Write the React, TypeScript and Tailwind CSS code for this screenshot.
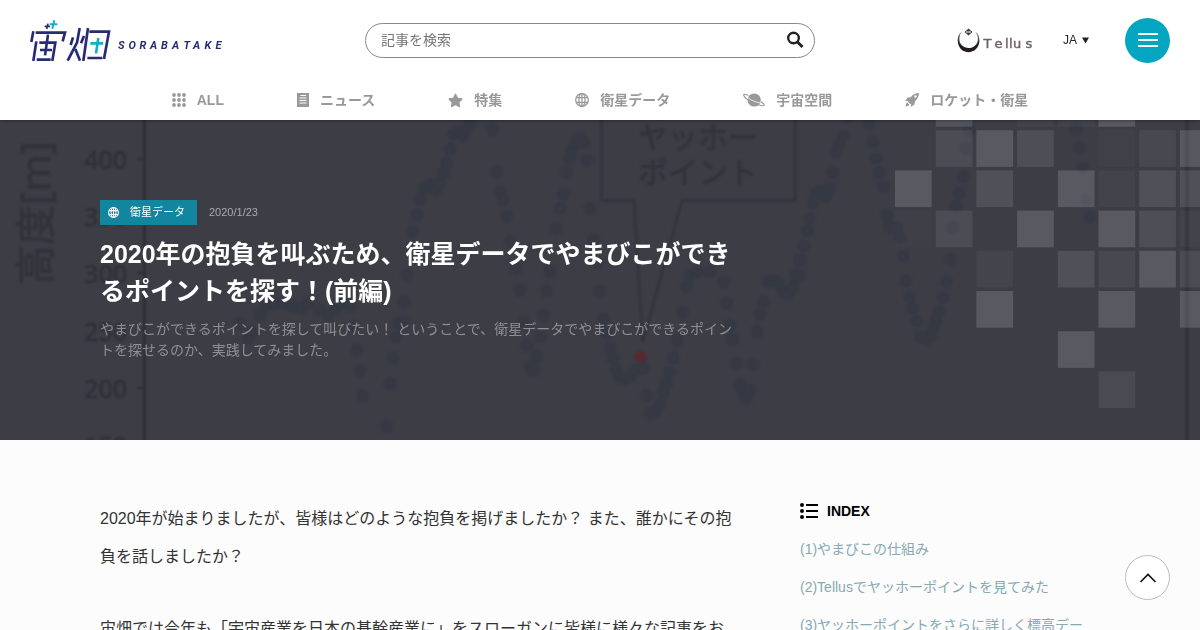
import React from "react";
import { FaStar } from "react-icons/fa";

type Point = [number, number];

const leftDots: Point[] = [
  [720, 610], [745, 655], [755, 635], [780, 585], [800, 555], [825, 550], [850, 548], [880, 560], [905, 565], [925, 550],
  [960, 570], [985, 585], [1005, 570], [1025, 550], [1050, 558], [1070, 690], [1080, 752], [1088, 827], [1160, 920],
  [1170, 790], [1180, 713], [1188, 650], [1195, 610], [1060, 620],
];

const centerDots: Point[] = [
  [8, 605], [12, 545], [20, 465], [38, 333], [50, 285], [60, 237], [72, 205], [90, 195], [105, 208], [120, 190], [130, 158],
  [140, 128], [150, 87], [160, 42], [178, 35], [190, 45], [200, 28], [210, 8], [278, 30], [290, 155], [300, 215], [310, 240],
  [320, 288], [330, 365], [348, 445], [360, 510], [370, 605], [380, 677], [390, 740], [400, 752], [410, 710], [422, 652],
  [430, 585], [440, 513], [450, 455], [468, 325], [480, 265], [490, 223], [499, 157], [508, 115], [517, 90], [530, 65],
  [542, 55], [550, 68], [560, 120], [570, 265], [580, 360], [592, 430], [600, 514], [610, 598], [620, 640], [630, 685],
  [640, 715], [648, 750], [660, 772], [675, 775], [690, 770], [705, 750], [730, 745], [740, 827], [750, 880], [765, 875],
  [780, 852], [790, 815], [800, 790], [808, 757], [820, 713], [830, 660], [848, 577], [860, 500], [870, 465], [895, 455],
  [930, 455], [970, 486], [980, 549], [990, 615], [998, 658], [1010, 730], [1020, 795], [1030, 815], [1037, 835],
  [1050, 810], [1060, 733], [1070, 635], [1080, 582], [1090, 545], [1102, 485], [1120, 482], [1135, 490], [1150, 515],
  [1165, 522], [1180, 500], [1187, 465], [1198, 420],
];

const rightDots: Point[] = [
  [0, 467], [3, 420], [12, 378], [22, 333], [29, 296], [38, 250], [48, 222], [58, 215], [78, 230], [90, 205], [98, 158],
  [108, 97], [118, 72], [130, 48], [140, -10], [208, 10], [218, 65], [228, 115], [238, 158], [250, 200], [259, 286],
  [268, 320], [290, 322], [300, 353], [310, 409], [318, 482], [328, 532], [338, 565], [350, 604], [360, 650], [378, 658],
  [392, 645], [400, 620], [408, 600], [418, 575], [430, 534], [440, 486], [450, 418], [458, 323], [468, 257], [478, 220],
  [490, 170], [497, 85], [508, 30], [828, 30], [838, 82], [848, 143], [858, 240], [870, 291],
];

const tiles: [number, number, number][] = [
  [1, 0, 0.12], [3, 0, 0.03], [4, 0, 0.03], [5, 0, 0.15],
  [1, 1, 0.08], [2, 1, 0.15], [3, 1, 0.09], [5, 1, 0.02], [6, 1, 0.06], [7, 1, 0.14],
  [0, 2, 0.15], [2, 2, 0.1], [4, 2, 0.15], [5, 2, 0.03], [6, 2, 0.1], [7, 2, 0.1],
  [0, 3, 0.01], [1, 3, 0.08], [3, 3, 0.15], [5, 3, 0.15], [6, 3, 0.09], [7, 3, 0.03],
  [2, 4, 0.04], [4, 4, 0.1], [5, 4, 0.06], [6, 4, 0.15], [7, 4, 0.08],
  [2, 5, 0.15], [5, 5, 0.15], [7, 5, 0.15],
  [4, 6, 0.15],
  [5, 7, 0.07],
];

function Dots({ points }: { points: Point[] }) {
  return (
    <g fill="#353943">
      {points.map(([x, y], i) => (
        <circle key={i} cx={x} cy={y} r="19" />
      ))}
    </g>
  );
}

function HeroChart() {
  return (
    <svg
      className="absolute inset-0 h-full w-full"
      viewBox="0 0 1200 320"
      preserveAspectRatio="xMidYMid slice"
      aria-hidden="true"
    >
      <g className="blur-[1px]">
        <g transform="scale(.33333)">
          <Dots points={leftDots} />
        </g>
        <g transform="translate(400 0) scale(.33333)">
          <Dots points={centerDots} />
          <path
            d="M604 -20V241H702L728 665M728 665L846 241H1186V-20"
            fill="none"
            stroke="#303038"
            strokeWidth="5"
          />
          <circle cx="722" cy="711" r="18" fill="#582931" />
        </g>
        <g transform="translate(800 0) scale(.33333)">
          <Dots points={rightDots} />
        </g>
        <path d="M144.500 -5V330M1187 -5V330" stroke="#2d2d36" strokeWidth="2.500" />
        <path d="M137 39h8M137 96h8M137 153h8M137 210h8M137 268h8" stroke="#2d2d36" strokeWidth="2" />
        <g
          fill="#303038"
          stroke="#303038"
          strokeWidth=".5"
          fontFamily="'Noto Sans', sans-serif"
          fontSize="25"
          textAnchor="end"
        >
          <text x="127" y="49">400</text>
          <text x="127" y="106">350</text>
          <text x="127" y="163">300</text>
          <text x="127" y="221">250</text>
          <text x="127" y="278">200</text>
          <text x="127" y="335">150</text>
        </g>
        <text
          transform="translate(50 165) rotate(-90)"
          fill="#32323a"
          stroke="#32323a"
          strokeWidth=".5"
          fontFamily="'Noto Sans', 'Noto Sans CJK JP', sans-serif"
          fontSize="40"
        >
          高度[m]
        </text>
        <g fill="#32323a" fontFamily="'Noto Sans CJK JP', sans-serif" fontSize="30" fontWeight="500" textAnchor="middle">
          <text x="698" y="28">ヤッホー</text>
          <text x="698" y="63">ポイント</text>
        </g>
      </g>
      <g transform="translate(895 -30)" fill="#fff">
        {tiles.map(([col, row, alpha]) => (
          <rect
            key={`${col}-${row}`}
            x={col * 40.7}
            y={row * 40.2}
            width="36.700"
            height="36.700"
            fillOpacity={alpha}
          />
        ))}
      </g>
    </svg>
  );
}

function SorabatakeLogo() {
  return (
    <svg className="block h-[42px] w-[193px]" viewBox="30 19 193 42" role="img" aria-label="宙畑 SORABATAKE">
      <g transform="scale(.33333)" fill="none" stroke="#272b72" strokeWidth="8">
        <path d="M100 94L94 126M107 98H195L188 124" />
        <path d="M144 71L140 87M134 79H150" strokeWidth="5" />
        <path d="M163 61L157 86M149 73H172" stroke="#12b0c4" strokeWidth="6" />
        <path d="M109 124L100 183M118 128H166L157 183M144 104L135 166M120 150H156M110 179H152" />
        <path d="M219 112L212 135M239 84L231 128L203 182M252 108L243 130M226 147L240 182" />
        <path d="M268 95H327L312 177M264 84L250 183M262 174H307M276 95H321" />
        <path d="M295 114L288 160M271 130H309" stroke="#12b0c4" />
      </g>
      <text
        x="118 128.500 139.500 150 161 172 183.500 193 204.500 215.500"
        y="48.500"
        fill="#272b72"
        fontFamily="Roboto, sans-serif"
        fontSize="11"
        fontStyle="italic"
        fontWeight="700"
      >
        SORABATAKE
      </text>
    </svg>
  );
}

function TellusLogo() {
  return (
    <svg className="block h-[26px] w-[78px]" viewBox="957 27 78 26" role="img" aria-label="Tellus">
      <path
        d="M961 32.500C956 37 957 46 962 50C966 53 972 53 976 49C981 44 980 36 976 32.500C980 38 978 44 974 46.500C970 49 965 48.500 961.500 45C958.500 42 958.500 36.500 961 32.500Z"
        fill="#231c1b"
      />
      <path d="M961 32.500C958 36 958 42 961.500 45M976 32.500C979 36 979 41 976 45" fill="none" stroke="#777" strokeWidth=".6" />
      <path d="M968.500 28.500L972.500 32L968.500 35.500L964.500 32Z" fill="#443c3a" />
      <path d="M966 32H971" stroke="#fff" />
      <text
        x="983.500 994.500 1005 1009 1013 1025.500"
        y="47.500"
        fill="#6b6462"
        stroke="#6b6462"
        strokeWidth=".4"
        fontFamily="'DejaVu Sans', sans-serif"
        fontSize="13"
      >
        Tellus
      </text>
    </svg>
  );
}

function GlobeIcon({ className }: { className: string }) {
  return (
    <svg className={className} viewBox="0 0 14 14" fill="none" stroke="currentColor" strokeWidth="1.300" aria-hidden="true">
      <circle cx="7" cy="7" r="6.300" />
      <ellipse cx="7" cy="7" rx="3.100" ry="6.300" />
      <path d="M7 .7V13.300M1.300 4.600H12.700M1.300 9.400H12.700" />
    </svg>
  );
}

function GridIcon() {
  return (
    <svg className="h-[14px] w-[14px]" viewBox="0 0 14 14" fill="currentColor" aria-hidden="true">
      {[2, 7, 12].map((y) => [2, 7, 12].map((x) => <circle key={`${x}-${y}`} cx={x} cy={y} r="1.900" />))}
    </svg>
  );
}

function NewsIcon() {
  return (
    <svg className="h-[14px] w-[12px]" viewBox="0 0 12 14" aria-hidden="true">
      <path d="M0 0H12V14H0Z" fill="currentColor" />
      <path d="M3.500 2.500H9M2.500 5H9.500M2.500 7.500H9.500M2.500 10H9.500" stroke="#fff" />
    </svg>
  );
}

function PlanetIcon() {
  return (
    <svg className="h-[14px] w-[22px]" viewBox="0 0 22 14" aria-hidden="true">
      <circle cx="11.200" cy="7" r="6.600" fill="currentColor" />
      <path d="M4 3.600C6 6.500 12.500 9.500 18.500 10" fill="none" stroke="#fff" strokeWidth=".8" />
      <path
        d="M5.500 2.200C2 1.200 .5 1.200 .6 2C.8 4.200 6 8 11 10.300C16 12.500 21 13.400 21.300 12.200C21.500 11.400 20 10 17.800 8.700"
        fill="none"
        stroke="currentColor"
        strokeWidth="1.100"
      />
    </svg>
  );
}

function RocketIcon() {
  return (
    <svg className="h-[14px] w-[14px]" viewBox="0 0 14 14" fill="currentColor" aria-hidden="true">
      <path
        fillRule="evenodd"
        d="M14 0C10.500 .1 7.500 1.600 5.600 4.200L2.600 4.500L0 8.300L3.200 7.700L3 8.800L5.200 11L6.300 10.800L5.700 14L9.500 11.400L9.800 8.400C12.400 6.500 13.900 3.500 14 0ZM10.500 2.300A1.200 1.200 0 1 1 10.500 4.700A1.200 1.200 0 1 1 10.500 2.300Z"
      />
      <path d="M2.300 9.600L4.400 11.700C3.800 12.900 2.200 13.100 .6 13.400C.9 11.800 1.100 10.200 2.300 9.600Z" />
    </svg>
  );
}

const navItems: { label: string; icon: React.ReactNode }[] = [
  { label: "ALL", icon: <GridIcon /> },
  { label: "ニュース", icon: <NewsIcon /> },
  { label: "特集", icon: <FaStar className="h-[15px] w-[15px]" /> },
  { label: "衛星データ", icon: <GlobeIcon className="h-[14px] w-[14px]" /> },
  { label: "宇宙空間", icon: <PlanetIcon /> },
  { label: "ロケット・衛星", icon: <RocketIcon /> },
];

const indexLinks = [
  "(1)やまびこの仕組み",
  "(2)Tellusでヤッホーポイントを見てみた",
  "(3)ヤッホーポイントをさらに詳しく標高データで探してみる",
];

function Header() {
  return (
    <header className="relative z-10 bg-white shadow-[0_1px_3px_rgba(0,0,0,0.3)]">
      <div className="flex h-[80px] items-center justify-between px-[30px]">
        <a href="#top">
          <SorabatakeLogo />
        </a>
        <form role="search" className="flex h-[35px] w-[450px] items-center rounded-full border border-[#888] pr-[10px] pl-[15px]">
          <input
            type="search"
            aria-label="記事を検索"
            placeholder="記事を検索"
            className="min-w-0 flex-1 bg-transparent text-[14px] outline-none placeholder:text-[#757575]"
          />
          <button type="button" aria-label="検索">
            <svg className="block h-[18px] w-[18px]" viewBox="0 0 18 18" fill="none" stroke="#222" aria-hidden="true">
              <circle cx="7.500" cy="7" r="5.300" strokeWidth="2.400" />
              <path d="M11.500 11L16.500 16" strokeWidth="3" />
            </svg>
          </button>
        </form>
        <div className="flex items-center">
          <a href="#tellus">
            <TellusLogo />
          </a>
          <button type="button" className="ml-[28px] flex w-[26px] items-center justify-between text-[12px] text-[#222]">
            JA
            <svg className="h-[7px] w-[7px]" viewBox="0 0 7 7" aria-hidden="true">
              <path d="M0 .5H7L3.500 6.500Z" fill="#222" />
            </svg>
          </button>
          <button
            type="button"
            aria-label="メニュー"
            className="ml-[36px] flex h-[45px] w-[45px] flex-col items-center justify-center gap-[4px] rounded-full bg-[#04a5c0]"
          >
            <span className="h-[2px] w-[20px] bg-white" />
            <span className="h-[2px] w-[20px] bg-white" />
            <span className="h-[2px] w-[20px] bg-white" />
          </button>
        </div>
      </div>
      <nav className="h-[40px]">
        <ul className="flex h-full items-center justify-center gap-[73px]">
          {navItems.map((item) => (
            <li key={item.label}>
              <a href="#category" className="flex items-center gap-[11px] text-[14px] leading-[20px] font-bold text-[#999]">
                {item.icon}
                {item.label}
              </a>
            </li>
          ))}
        </ul>
      </nav>
    </header>
  );
}

export default function App() {
  return (
    <div
      id="top"
      className="min-h-screen bg-[#fcfcfc] font-['Liberation_Sans','Noto_Sans_CJK_JP',sans-serif] text-[#333]"
      lang="ja"
    >
      <Header />
      <section className="relative overflow-hidden bg-[#3d3d46]">
        <HeroChart />
        <div className="relative mx-auto min-h-[320px] max-w-[1000px] pt-[80px]">
          <div className="flex items-center gap-[12px]">
            <a
              href="#satellite"
              className="flex h-[25px] items-center gap-[11px] bg-[#12869f] pr-[12px] pl-[8px] text-[11px] text-white"
            >
              <GlobeIcon className="h-[11px] w-[11px]" />
              衛星データ
            </a>
            <time dateTime="2020-01-23" className="text-[11px] text-[#aaa]">2020/1/23</time>
          </div>
          <h1 className="mt-[11px] max-w-[650px] text-[25px] leading-[37px] font-bold text-white">
            2020年の抱負を叫ぶため、衛星データでやまびこができるポイントを探す！(前編)
          </h1>
          <p className="mt-[9px] max-w-[640px] text-[14px] leading-[21px] text-[#8f8f93]">
            やまびこができるポイントを探して叫びたい！ ということで、衛星データでやまびこができるポイントを探せるのか、実践してみました。
          </p>
        </div>
      </section>
      <main className="mx-auto flex max-w-[1000px] gap-[60px] pt-[60px]">
        <article className="w-[640px] space-y-[34px] text-[16px] leading-[38px]">
          <p>2020年が始まりましたが、皆様はどのような抱負を掲げましたか？ また、誰かにその抱負を話しましたか？</p>
          <p>
            宙畑では今年も「宇宙産業を日本の基幹産業に」をスローガンに皆様に様々な記事をお
            <br />
            届けします。
          </p>
        </article>
        <aside className="flex-1 pr-[10px]">
          <h2 className="flex h-[22px] items-center gap-[9px] text-[14px] font-bold text-black">
            <svg className="h-[16px] w-[18px]" viewBox="0 0 18 16" aria-hidden="true">
              <path d="M6 2H18M6 8H18M6 14H18" stroke="#000" strokeWidth="2" />
              <circle cx="2" cy="2" r="2" />
              <circle cx="2" cy="8" r="2" />
              <circle cx="2" cy="14" r="2" />
            </svg>
            INDEX
          </h2>
          <ol className="mt-[8px] text-[14px] leading-[38px] text-[#86a9b3]">
            {indexLinks.map((label) => (
              <li key={label}>
                <a href="#section">{label}</a>
              </li>
            ))}
          </ol>
        </aside>
      </main>
      <a
        href="#top"
        aria-label="ページの先頭へ"
        className="fixed right-[30px] bottom-[30px] flex h-[45px] w-[45px] items-center justify-center rounded-full border border-[#bbb] bg-white"
      >
        <svg className="h-[10px] w-[18px]" viewBox="0 0 18 10" fill="none" stroke="#111" strokeWidth="1.600" aria-hidden="true">
          <path d="M1.500 9L9 1.500L16.500 9" />
        </svg>
      </a>
    </div>
  );
}
